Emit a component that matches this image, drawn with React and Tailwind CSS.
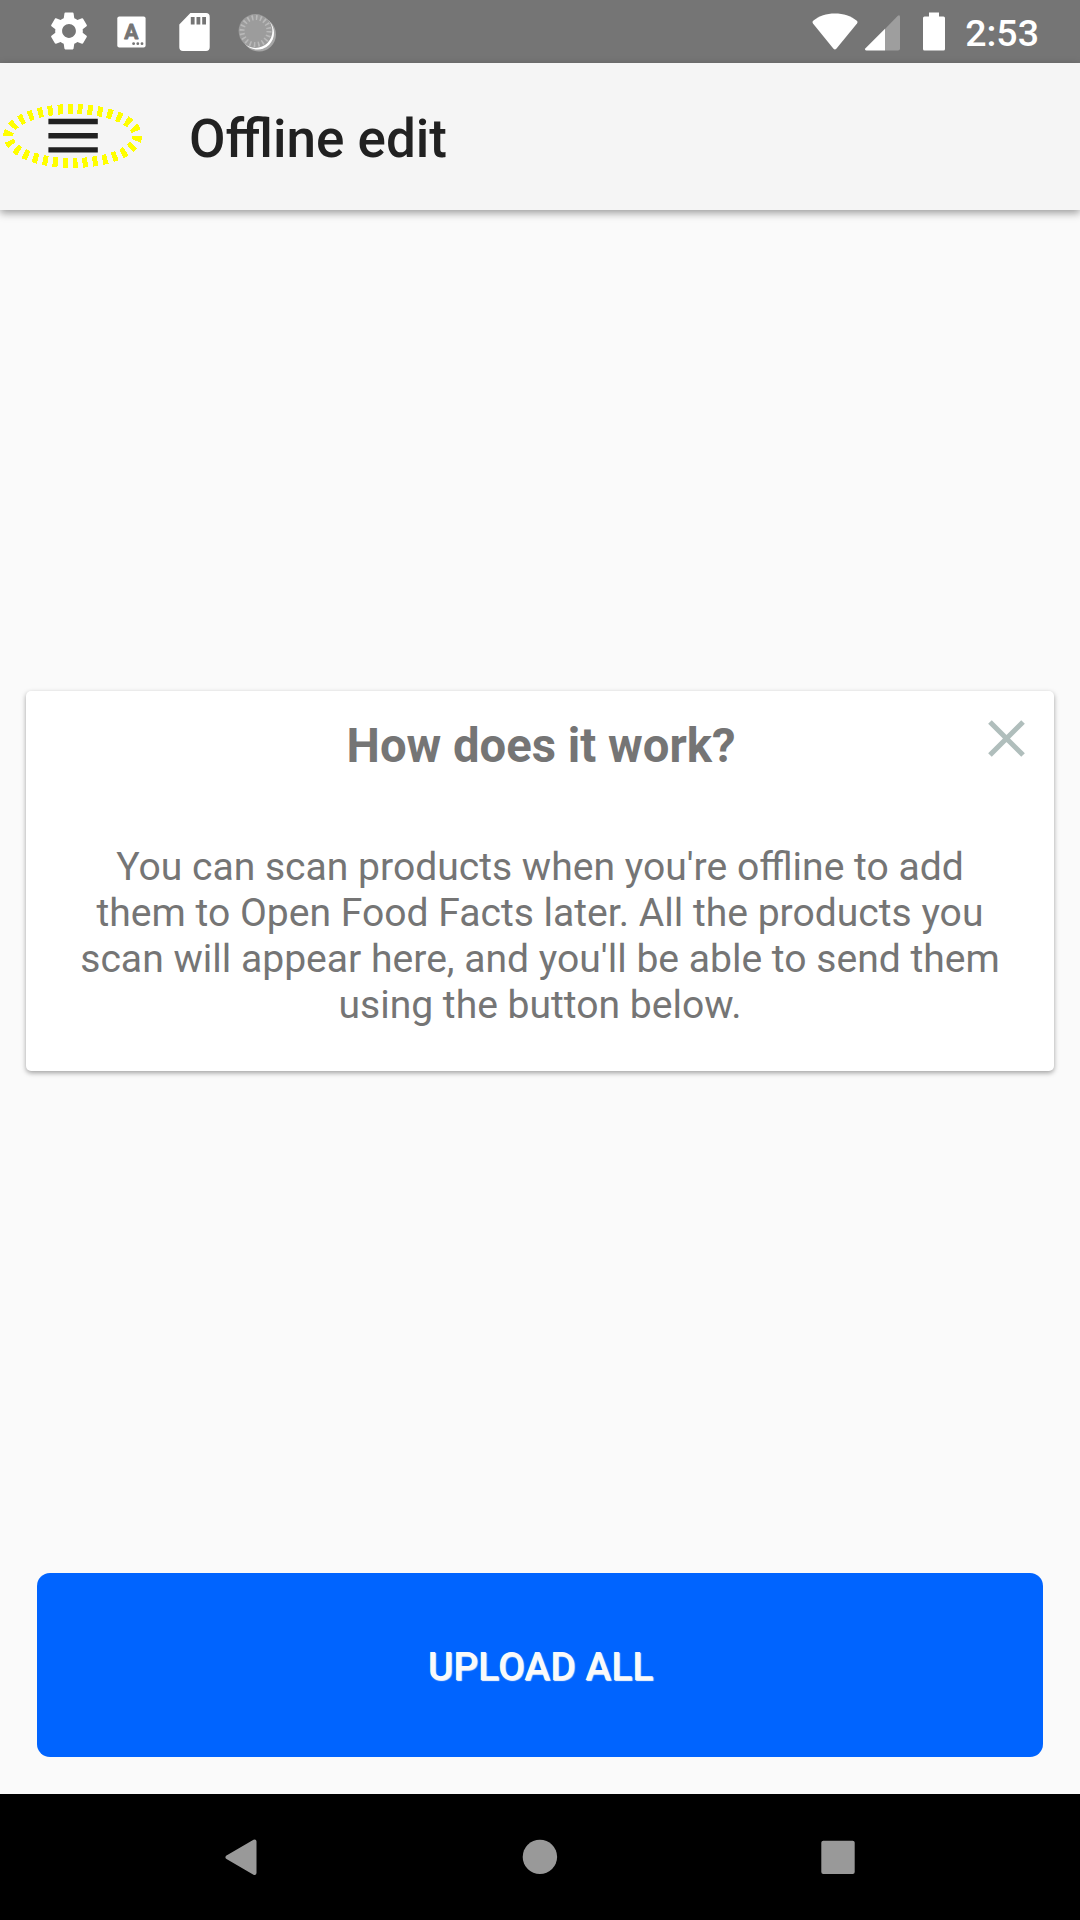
import React from "react";
import { MdSettings } from "react-icons/md";

function StatusBar() {
  return (
    <div className="flex h-[63px] items-center justify-between bg-[#757575] pr-[41px] pl-[45px] text-white">
      <div className="flex items-center gap-[17px]">
        <MdSettings className="relative -top-px left-[0.5px] size-[46px]" />
        <svg className="size-[46px]" viewBox="108 8.5 46 46">
          <rect x="117.3" y="16" width="28.3" height="31" rx="2" fill="#fff" />
          <text x="131.2" y="38.7" textAnchor="middle" fontSize="21" className="font-['Roboto',sans-serif] font-bold" fill="#757575" stroke="#757575" strokeWidth="0.8" strokeLinejoin="round">A</text>
          <circle cx="133.6" cy="43.2" r="1.4" fill="#757575" />
          <circle cx="137.8" cy="43.2" r="1.4" fill="#757575" />
          <circle cx="142" cy="43.2" r="1.4" fill="#757575" />
        </svg>
        <svg className="size-[46px]" viewBox="171 8.5 46 46">
          <path d="M190.4 12.6H206a3.7 3.7 0 0 1 3.7 3.7V46.700a3.700 3.700 0 0 1-3.700 3.700H183a3.700 3.700 0 0 1-3.700-3.700V24Z" fill="#fff" />
          <path d="M190.800 16.500h3.800v7.500h-3.800zM196.500 16.500h3.800v7.500h-3.800zM202.200 16.500h3.800v7.500h-3.800z" fill="#757575" />
        </svg>
        <svg className="size-[46px]" viewBox="234 8.5 46 46">
          <circle cx="259" cy="34" r="17" fill="#a6a6a6" />
          <circle cx="257.500" cy="32.500" r="16.500" fill="#fff" />
          <circle cx="255.500" cy="30.500" r="16.900" fill="#9c9c9c" />
          <circle cx="255.500" cy="30.500" r="13.500" fill="none" stroke="#b9b9b9" strokeWidth="5" strokeDasharray="1.600 2.641" />
        </svg>
      </div>
      <div className="flex items-center">
        <svg className="h-[46px] w-[46px]" viewBox="812 8.5 46 46">
          <path d="M834.900 13c8.600 0 16 2.700 21.600 6.900q1.700 1.400 .5 3L836.300 48.300q-1.400 1.600-2.800 0L813 22.900q-1.200-1.600 .5-3C819 15.700 826.400 13 834.900 13Z" fill="#fff" />
        </svg>
        <svg className="ml-[6px] h-[46px] w-[37px]" viewBox="864 8.5 37 46">
          <path d="M885 28.500L897.600 15.400Q900 13.700 900 16.500V48q0 2-2 2H885Z" fill="#9e9e9e" />
          <path d="M885 28.200V50H866.500q-2.400-.3-1-2.300Z" fill="#fff" />
        </svg>
        <svg className="ml-[21px] h-[46px] w-[24px]" viewBox="922 8.5 24 46">
          <path d="M929 12h10v4h4.500q1.500 0 1.500 1.500V48.500q0 1.500-1.500 1.500H924.500q-1.500 0-1.500-1.500V17.500q0-1.500 1.500-1.500H929Z" fill="#fff" />
        </svg>
        <span className="ml-[19px] pt-[5px] text-[37.500px] leading-none font-medium">2:53</span>
      </div>
    </div>
  );
}

function AppBar() {
  return (
    <header className="z-10 flex h-[147px] bg-[#f5f5f5] shadow-[0_3px_8px_rgba(0,0,0,0.38)]">
      <button className="h-[147px] w-[147px]" aria-label="Menu">
        <svg className="size-[147px]" viewBox="0 63 147 147">
          <path d="M48.400 118.800h49.400v5.400H48.400zM48.400 133h49.400v5.400H48.400zM48.400 147.200h49.400v5.400H48.400z" fill="#212121" />
          <ellipse cx="72.700" cy="136" rx="64.500" ry="27" fill="none" stroke="#ff0" strokeWidth="10" pathLength="300" strokeDasharray="5 5" shapeRendering="crispEdges" />
        </svg>
      </button>
      <h1 className="mt-[45px] ml-[42px] text-[53px] leading-[62px] font-medium whitespace-nowrap text-[#212121]">Offline edit</h1>
    </header>
  );
}

function InfoCard() {
  return (
    <section className="relative mx-[26px] mt-[481px] h-[380px] rounded-[5px] bg-white text-center text-[#757575] shadow-[0_2px_5px_rgba(0,0,0,0.36)]">
      <h2 className="pt-[27px] pl-[2px] text-[47.250px] leading-[56px] font-bold">How does it work?</h2>
      <p className="mt-[70px] text-[39.100px] leading-[46px]">
        You can scan products when you're offline to add<br />
        them to Open Food Facts later. All the products you<br />
        scan will appear here, and you'll be able to send them<br />
        using the button below.
      </p>
      <svg className="absolute top-[16px] right-[16px] size-[63px]" viewBox="0 0 24 24">
        <path d="M5.700 5.700 18.300 18.300M18.300 5.700 5.700 18.300" stroke="#b0bebc" strokeWidth="1.950" />
      </svg>
    </section>
  );
}

function NavBar() {
  return (
    <nav className="flex h-[126px] items-center justify-between bg-black px-[210px]">
      <svg className="size-[63px]" viewBox="210 1825.500 63 63">
        <path d="M254.500 1841 254.500 1872.600 227.500 1856.800Z" fill="#999" stroke="#999" strokeWidth="4" strokeLinejoin="round" />
      </svg>
      <svg className="size-[63px]" viewBox="508.500 1825.500 63 63">
        <circle cx="539.400" cy="1856.400" r="17.200" fill="#999" />
      </svg>
      <svg className="size-[63px]" viewBox="807 1825.500 63 63">
        <rect x="821.300" y="1840.300" width="33.400" height="33.200" rx="2" fill="#999" />
      </svg>
    </nav>
  );
}

export default function App() {
  return (
    <div className="flex h-[1920px] w-[1080px] flex-col overflow-hidden bg-[#fafafa] font-['Roboto',sans-serif]">
      <StatusBar />
      <AppBar />
      <main className="flex flex-1 flex-col">
        <InfoCard />
        <button className="mx-[37px] mt-auto mb-[37px] h-[184px] rounded-[13px] bg-[#0064ff] pt-[4px] pl-[1px] text-[39px] leading-none font-medium text-[#fafafa] [text-shadow:1px_1px_1px_#fafafa]">UPLOAD ALL</button>
      </main>
      <NavBar />
    </div>
  );
}
